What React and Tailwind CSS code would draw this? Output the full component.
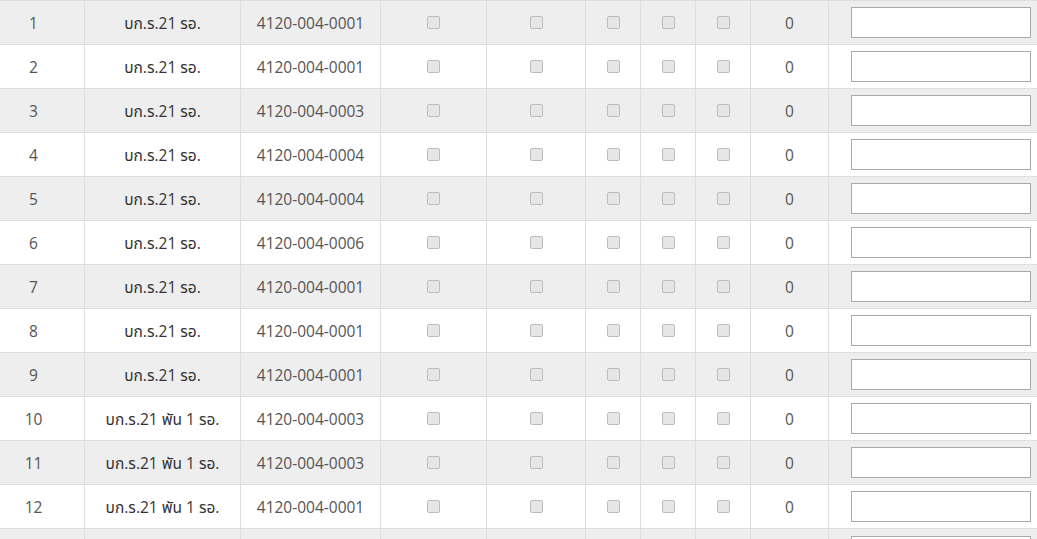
import React from 'react';

const rows = [
  { no: 1, unit: 'บก.ร.21 รอ.', code: '4120-004-0001' },
  { no: 2, unit: 'บก.ร.21 รอ.', code: '4120-004-0001' },
  { no: 3, unit: 'บก.ร.21 รอ.', code: '4120-004-0003' },
  { no: 4, unit: 'บก.ร.21 รอ.', code: '4120-004-0004' },
  { no: 5, unit: 'บก.ร.21 รอ.', code: '4120-004-0004' },
  { no: 6, unit: 'บก.ร.21 รอ.', code: '4120-004-0006' },
  { no: 7, unit: 'บก.ร.21 รอ.', code: '4120-004-0001' },
  { no: 8, unit: 'บก.ร.21 รอ.', code: '4120-004-0001' },
  { no: 9, unit: 'บก.ร.21 รอ.', code: '4120-004-0001' },
  { no: 10, unit: 'บก.ร.21 พัน 1 รอ.', code: '4120-004-0003' },
  { no: 11, unit: 'บก.ร.21 พัน 1 รอ.', code: '4120-004-0003' },
  { no: 12, unit: 'บก.ร.21 พัน 1 รอ.', code: '4120-004-0001' },
];

// greyed-out checkbox look from the old browser render
const Box = () => (
  <input
    type="checkbox"
    disabled
    className="appearance-none block mx-auto w-[13px] h-[13px] rounded-[2px] border border-[#bcbcbc] bg-[#e6e6e6]"
  />
);

const cell = 'border border-[#dddddd] p-0 text-center align-middle';
const txt = `${cell} pt-[3px]`;

const Row = ({ r, odd }) => (
  <tr className={`h-[44px] ${odd ? 'bg-[#eeeeee]' : 'bg-white'}`}>
    <td className={txt}>{r ? r.no : ''}</td>
    <td className={`${txt} text-[#333]`}>{r ? r.unit : ''}</td>
    <td className={txt}>{r ? r.code : ''}</td>
    <td className={cell}>{r && <Box />}</td>
    <td className={cell}>{r && <Box />}</td>
    <td className={cell}>{r && <Box />}</td>
    <td className={cell}>{r && <Box />}</td>
    <td className={cell}>{r && <Box />}</td>
    <td className={txt}>{r ? '0' : ''}</td>
    <td className={`${cell} ${r ? '' : 'align-top pt-[7px]'}`}>
      <input
        type="text"
        className="block mx-auto w-[180px] h-[31px] border border-[#a9a9a9] bg-white"
      />
    </td>
  </tr>
);

export default function App() {
  return (
    <div className="w-[1037px] h-[539px] overflow-hidden bg-white">
      <table
        className="table-fixed border-collapse w-[1070px] ml-[-18px] text-[15.5px] text-[#555]"
        style={{ fontFamily: '"Open Sans", "Noto Sans", "Noto Sans Thai", "DejaVu Sans", sans-serif' }}
      >
        <colgroup>
          <col className="w-[102px]" />
          <col className="w-[156px]" />
          <col className="w-[140px]" />
          <col className="w-[106px]" />
          <col className="w-[99px]" />
          <col className="w-[55px]" />
          <col className="w-[55px]" />
          <col className="w-[55px]" />
          <col className="w-[78px]" />
          <col className="w-[224px]" />
        </colgroup>
        <tbody>
          {rows.map((r) => (
            <Row key={r.no} r={r} odd={r.no % 2 === 1} />
          ))}
          <Row r={null} odd />
        </tbody>
      </table>
    </div>
  );
}
